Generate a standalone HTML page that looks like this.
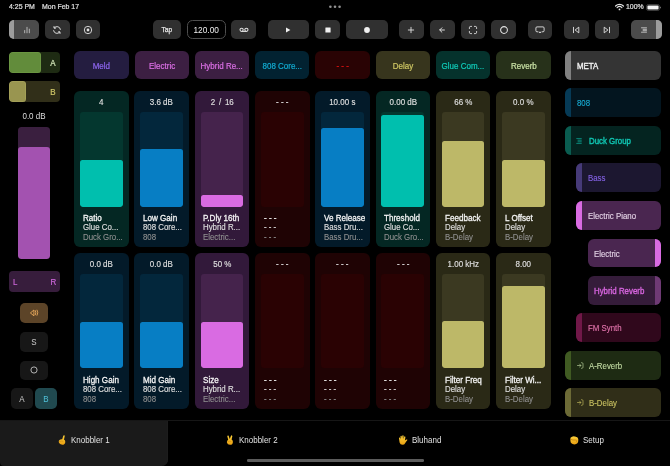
<!DOCTYPE html>
<html lang="en"><head><meta charset="utf-8"><title>Knobbler</title><style>
*{box-sizing:border-box;margin:0;padding:0}
html,body{width:670px;height:466px;background:#000;overflow:hidden}
body{font-family:"Liberation Sans",sans-serif;color:#ddd;font-size:8.6px;position:relative}
#app{position:absolute;left:0;top:0;width:670px;height:466px;overflow:hidden;transform:translateZ(0);will-change:transform}
.a{position:absolute}
.btn{position:absolute;top:20px;height:19.4px;border-radius:5px;background:#303030}
.btn svg{position:absolute;left:50%;top:50%;transform:translate(-50%,-50%);overflow:visible}
.t{position:absolute;white-space:nowrap;line-height:1}
.c{text-align:center}
.n{display:inline-block;transform:scaleX(.93);white-space:nowrap}
.nl{transform-origin:0 50%}
.nr{transform-origin:100% 50%}
.m{-webkit-text-stroke:0.3px}
.dev{position:absolute;top:51.3px;height:27.9px;border-radius:6px;width:54.3px;text-align:center;line-height:30.1px;font-size:8.6px;white-space:nowrap;overflow:hidden;-webkit-text-stroke:0.2px}
.cell{position:absolute;width:54.6px;height:155.8px;border-radius:6px}
.cell .v{position:absolute;left:-4px;right:-4px;top:5.5px;text-align:center;font-size:8.6px;line-height:10px;color:#e0e0e0;white-space:nowrap;transform:scaleX(.93);-webkit-text-stroke:0.12px}
.cell .tr{position:absolute;left:5.9px;width:42.7px;top:21.1px;height:94px;border-radius:3px;overflow:hidden}
.cell .f{position:absolute;left:0;right:0;bottom:0;border-radius:2.5px}
.cell .l{position:absolute;left:8.8px;width:60px;white-space:nowrap;font-size:8.6px;line-height:10px;transform:scaleX(.93);transform-origin:0 50%}
.cell .l1{top:121.5px;color:#f6f6f6;-webkit-text-stroke:0.28px #f6f6f6;transform:scaleX(.94)}
.cell .l2{top:131.3px;color:#dcdcdc;-webkit-text-stroke:0.18px #dcdcdc;transform:scaleX(.915)}
.cell .l3{top:141px;color:#909090;transform:scaleX(.915);-webkit-text-stroke:0.1px}
.trk{position:absolute;height:28.6px;border-radius:6px;overflow:hidden;font-size:8.6px;line-height:30.2px;white-space:nowrap}
.trk i{position:absolute;top:0;bottom:0;width:6px}
.trk span{position:absolute;top:0;transform:scaleX(.915);transform-origin:0 50%}
.trk svg{position:absolute}
.sb{position:absolute;left:20.1px;width:28.1px;height:19.8px;border-radius:5px;background:#171717;text-align:center;line-height:20.6px;font-size:8.6px;color:#cfcfcf}
.tab{position:absolute;top:420.4px;height:45px;width:167.5px;text-align:center;line-height:39.8px;font-size:8.6px;color:#e2e2e2;white-space:nowrap}
.tab svg{vertical-align:-1.6px;margin-right:5.5px}
.sr{position:absolute;width:1px;height:1px;overflow:hidden;opacity:0;font-size:1px}
</style></head><body><div id="app">
<div class="t" style="left:9px;top:3.1px;font-size:7.2px;-webkit-text-stroke:0.2px;color:#e0e0e0;transform:scaleX(.965);transform-origin:0 50%">4:25 PM</div>
<div class="t" style="left:41.8px;top:3.1px;font-size:7.2px;-webkit-text-stroke:0.2px;color:#e0e0e0;transform:scaleX(.965);transform-origin:0 50%">Mon Feb 17</div>
<svg class="a" style="left:326px;top:4px" width="18" height="6" viewBox="0 0 18 6"><circle cx="4.4" cy="2.8" r="1.3" fill="#929292"/><circle cx="9" cy="2.8" r="1.3" fill="#929292"/><circle cx="13.6" cy="2.8" r="1.3" fill="#929292"/></svg>
<svg class="a" style="left:614.5px;top:2.5px" width="9" height="8" viewBox="0 0 9 8"><path d="M0.6 3 A5.6 5.6 0 0 1 8.4 3" fill="none" stroke="#e6e6e6" stroke-width="1.2" stroke-linecap="round"/><path d="M2.1 4.6 A3.4 3.4 0 0 1 6.9 4.6" fill="none" stroke="#e6e6e6" stroke-width="1.2" stroke-linecap="round"/><circle cx="4.5" cy="6.4" r="0.9" fill="#e6e6e6"/></svg>
<div class="t" style="left:625.8px;top:3.4px;font-size:7.2px;-webkit-text-stroke:0.2px;color:#e0e0e0;transform:scaleX(.965);transform-origin:0 50%">100%</div>
<svg class="a" style="left:646.2px;top:3.6px" width="16" height="8" viewBox="0 0 16 8"><rect x="0.5" y="0.5" width="13" height="6" rx="1.8" fill="none" stroke="#777" stroke-width="0.5"/><rect x="1.4" y="1.4" width="11.2" height="4.2" rx="1" fill="#f4f4f4"/><rect x="14.1" y="2.5" width="0.8" height="2" rx="0.4" fill="#888"/></svg>
<div class="btn" style="left:8.5px;width:30.7px;background:#4b4b4b;overflow:hidden;"><i class="a" style="left:0;top:0;bottom:0;width:5.8px;background:#9c9c9c"></i><span class="a" style="left:6px;right:0;top:0;bottom:0"><svg width="6" height="7" viewBox="0 0 6 7" style="margin-left:-0.2px"><g stroke="#d0d0d0" stroke-width="0.8" stroke-linecap="round"><path d="M0.7 4V6.3M3 0.8V6.3M5.3 2.6V6.3"/></g></svg></span></div>
<div class="btn" style="left:45.1px;width:24.8px;background:#303030;"><svg width="9" height="8" viewBox="0 0 9 8"><g fill="none" stroke="#e2e2e2" stroke-width="0.95" stroke-linecap="round" stroke-linejoin="round"><path d="M7.9 3.4A3.4 3.2 0 0 0 1.8 1.9M1.1 4.6A3.4 3.2 0 0 0 7.2 6.1"/><path d="M1.5 0.5V2.1H3.1M7.5 7.5V5.9H5.9"/></g></svg></div>
<div class="btn" style="left:75.7px;width:24.7px;background:#303030;"><svg width="9" height="9" viewBox="0 0 9 9"><circle cx="4.5" cy="4.5" r="3.7" fill="none" stroke="#e2e2e2" stroke-width="0.9"/><circle cx="4.5" cy="4.5" r="1.4" fill="#e2e2e2"/></svg></div>
<div class="btn" style="left:153.2px;width:27.8px;background:#303030;"><div class="t c" style="left:0;right:0;top:6.1px;font-size:7px;color:#e6e6e6;-webkit-text-stroke:0.25px;transform:scaleX(.95)">Tap</div></div>
<div class="btn" style="left:186.8px;width:38.8px;background:#000;border:0.8px solid #4e4e4e;border-radius:5.5px;"><div class="t c" style="left:0;right:0;top:4.7px;font-size:8.3px;color:#f0f0f0">120.00</div></div>
<div class="btn" style="left:231.2px;width:24.8px;background:#303030;"><svg width="10" height="5" viewBox="0 0 10 5"><g fill="none" stroke="#e2e2e2" stroke-width="1.05"><circle cx="2.6" cy="2.3" r="1.6"/><circle cx="7.4" cy="2.3" r="1.6"/><path d="M2.6 3.9H7.4"/></g></svg></div>
<div class="btn" style="left:267.6px;width:41.8px;background:#303030;"><svg width="6" height="6" viewBox="0 0 6 6"><path d="M1 0.4L5.4 3L1 5.6Z" fill="#f0f0f0"/></svg></div>
<div class="btn" style="left:315.2px;width:24.8px;background:#303030;"><svg width="6" height="6" viewBox="0 0 6 6"><rect x="0.4" y="0.4" width="5.2" height="5.2" rx="0.4" fill="#f0f0f0"/></svg></div>
<div class="btn" style="left:345.8px;width:42.0px;background:#303030;"><svg width="6" height="6" viewBox="0 0 6 6"><circle cx="3" cy="3" r="2.9" fill="#f0f0f0"/></svg></div>
<div class="btn" style="left:399px;width:24.8px;background:#303030;"><svg width="7" height="7" viewBox="0 0 7 7"><path d="M3.5 0.8V6.2M0.8 3.5H6.2" stroke="#e0e0e0" stroke-width="0.9" stroke-linecap="round"/></svg></div>
<div class="btn" style="left:430px;width:24.8px;background:#303030;"><svg width="6" height="6" viewBox="0 0 6 6"><path d="M5.4 3H0.8M2.9 0.8L0.7 3L2.9 5.2" fill="none" stroke="#e2e2e2" stroke-width="0.95" stroke-linecap="round" stroke-linejoin="round"/></svg></div>
<div class="btn" style="left:460.6px;width:24.8px;background:#303030;"><svg width="9" height="9" viewBox="0 0 9 9"><path d="M0.9 3V2.2Q0.9 0.9 2.2 0.9H3M6 0.9H6.8Q8.1 0.9 8.1 2.2V3M8.1 6V6.8Q8.1 8.1 6.8 8.1H6M3 8.1H2.2Q0.9 8.1 0.9 6.8V6" fill="none" stroke="#e2e2e2" stroke-width="0.95" stroke-linecap="round"/></svg></div>
<div class="btn" style="left:491.2px;width:24.8px;background:#303030;"><svg width="9" height="9" viewBox="0 0 9 9"><circle cx="4.5" cy="4.5" r="3.4" fill="none" stroke="#e2e2e2" stroke-width="1.05"/></svg></div>
<div class="btn" style="left:527.6px;width:24.8px;background:#303030;"><svg width="10" height="8" viewBox="0 0 10 8"><path d="M3 5.8H2Q0.9 5.8 0.9 4.7V2Q0.9 0.9 2 0.9H8Q9.1 0.9 9.1 2V4.7Q9.1 5.8 8 5.8H7" fill="none" stroke="#e2e2e2" stroke-width="0.9" stroke-linecap="round"/><path d="M3.7 7L5 5.2L6.3 7Z" fill="#e2e2e2"/></svg></div>
<div class="btn" style="left:564px;width:24.8px;background:#303030;"><svg width="7" height="7" viewBox="0 0 7 7"><path d="M1 0.8V6.2M6 0.9L2.6 3.5L6 6.1Z" fill="none" stroke="#e2e2e2" stroke-width="0.9" stroke-linecap="round" stroke-linejoin="round"/></svg></div>
<div class="btn" style="left:594.6px;width:24.8px;background:#303030;"><svg width="7" height="7" viewBox="0 0 7 7"><path d="M6 0.8V6.2M1 0.9L4.4 3.5L1 6.1Z" fill="none" stroke="#e2e2e2" stroke-width="0.9" stroke-linecap="round" stroke-linejoin="round"/></svg></div>
<div class="btn" style="left:631px;width:30.6px;background:#4b4b4b;overflow:hidden;"><i class="a" style="right:0;top:0;bottom:0;width:5.6px;background:#9c9c9c"></i><span class="a" style="left:0;right:5.6px;top:0;bottom:0"><svg width="7" height="6" viewBox="0 0 7 6"><path d="M0.6 0.8H6.4M2.2 2.3H6.4M2.2 3.7H6.4M0.6 5.2H6.4" stroke="#d8d8d8" stroke-width="0.8"/></svg></span></div>
<div class="a" style="left:8.5px;top:52px;width:51.1px;height:21px;border-radius:4px;background:#1e2b13;overflow:hidden"><div class="a" style="left:0;top:0;bottom:0;width:32.5px;background:#628c3b;border-radius:3.5px;box-shadow:inset 0 0 0 0.6px rgba(160,210,110,.28)"></div><div class="t n" style="left:41.4px;top:6.5px;color:#d4e8ba;-webkit-text-stroke:0.2px">A</div></div>
<div class="a" style="left:8.5px;top:81.4px;width:51.1px;height:21px;border-radius:4px;background:#312f19;overflow:hidden"><div class="a" style="left:0;top:0;bottom:0;width:17.5px;background:#999550;border-radius:3.5px;box-shadow:inset 0 0 0 0.6px rgba(220,215,130,.28)"></div><div class="t n" style="left:41.4px;top:6.5px;color:#d0c768;-webkit-text-stroke:0.2px">B</div></div>
<div class="t c" style="left:4px;width:60px;top:112px;color:#dedede;transform:scaleX(.93)">0.0 dB</div>
<div class="a" style="left:17.8px;top:127px;width:32.6px;height:132px;border-radius:3.5px;background:#3a1f3f;overflow:hidden"><div class="a" style="left:0;right:0;bottom:0;top:20px;background:#a352b0;border-radius:3px"></div></div>
<div class="a" style="left:8.6px;top:271.4px;width:51px;height:20.8px;border-radius:4px;background:#371d3c"><div class="t n nl" style="left:4.2px;top:6.3px;color:#cf68dc;-webkit-text-stroke:0.15px">L</div><div class="t n nr" style="right:3.8px;top:6.3px;color:#cf68dc;-webkit-text-stroke:0.15px">R</div></div>
<div class="sb" style="top:303.3px;background:#5c4428"><svg class="a" style="left:10.2px;top:6.1px" width="9" height="8" viewBox="0 0 9 8"><g fill="none" stroke="#f2b060" stroke-width="0.85" stroke-linecap="round" stroke-linejoin="round"><path d="M0.7 3.7L3.9 1V6.4Z"/><path d="M5.4 1.6Q6.5 3.7 5.4 5.8M7.1 1.1Q8.6 3.7 7.1 6.3"/></g></svg></div>
<div class="sb" style="top:331.9px;height:20.6px;line-height:21.6px"><span class="n">S</span></div>
<div class="sb" style="top:361.2px;height:18.4px"><svg class="a" style="left:10.05px;top:4.7px" width="8" height="8" viewBox="0 0 8 8"><circle cx="4" cy="4" r="3.1" fill="none" stroke="#cfcfcf" stroke-width="0.85"/></svg><span class="sr">O</span></div>
<div class="sb" style="left:11.2px;width:21.8px;top:388.3px;height:20.6px;line-height:23.2px"><span class="n">A</span></div>
<div class="sb" style="left:35.3px;width:21.9px;top:388.3px;height:20.6px;line-height:23.2px;background:#20494f;color:#4fc0d8"><span class="n">B</span></div>
<div class="dev" style="left:74.25px;background:#241d40;color:#8d66ee"><span class="n">Meld</span></div>
<div class="dev" style="left:134.55px;background:#3c1f42;color:#dc70e6"><span class="n">Electric</span></div>
<div class="dev" style="left:194.85px;background:#3c1f42;color:#dc70e6"><span class="n">Hybrid Re...</span></div>
<div class="dev" style="left:255.15px;background:#022231;color:#13acd2"><span class="n">808 Core...</span></div>
<div class="dev" style="left:315.45px;background:#290304;color:#e01212"><span class="n">- - -</span></div>
<div class="dev" style="left:375.75px;background:#37351d;color:#d0c864"><span class="n">Delay</span></div>
<div class="dev" style="left:436.05px;background:#05322c;color:#10ccba"><span class="n">Glue Com...</span></div>
<div class="dev" style="left:496.35px;background:#27311a;color:#cae2a6"><span class="n">Reverb</span></div>
<div class="cell" style="left:74.1px;top:91.2px;height:156.2px;background:#042723"><div class="v">4</div><div class="tr" style="top:21.1px;height:94.6px;background:#04372f"><div class="f" style="height:46.9px;background:#00bfae"></div></div><div class="l l1">Ratio</div><div class="l l2">Glue Co...</div><div class="l l3">Duck Gro...</div></div>
<div class="cell" style="left:134.4px;top:91.2px;height:156.2px;background:#031a29"><div class="v">3.6 dB</div><div class="tr" style="top:21.1px;height:94.6px;background:#03273c"><div class="f" style="height:58.3px;background:#077ec4"></div></div><div class="l l1">Low Gain</div><div class="l l2">808 Core...</div><div class="l l3">808</div></div>
<div class="cell" style="left:194.7px;top:91.2px;height:156.2px;background:#32193a"><div class="v" style="word-spacing:1.6px">2 / 16</div><div class="tr" style="top:21.1px;height:94.6px;background:#45234c"><div class="f" style="height:12.3px;background:#d96be2"></div></div><div class="l l1">P.Dly 16th</div><div class="l l2">Hybrid R...</div><div class="l l3">Electric...</div></div>
<div class="cell" style="left:255.0px;top:91.2px;height:156.2px;background:#1f0304"><div class="v">- - -</div><div class="tr" style="top:21.1px;height:94.6px;background:#2a0203"></div><div class="l l1">- - -</div><div class="l l2">- - -</div><div class="l l3">- - -</div></div>
<div class="cell" style="left:315.3px;top:91.2px;height:156.2px;background:#031a29"><div class="v">10.00 s</div><div class="tr" style="top:21.1px;height:94.6px;background:#03273c"><div class="f" style="height:78.9px;background:#077ec4"></div></div><div class="l l1">Ve Release</div><div class="l l2">Bass Dru...</div><div class="l l3">Bass Dru...</div></div>
<div class="cell" style="left:375.6px;top:91.2px;height:156.2px;background:#042723"><div class="v">0.00 dB</div><div class="tr" style="top:21.1px;height:94.6px;background:#04372f"><div class="f" style="height:91.9px;background:#00bfae"></div></div><div class="l l1">Threshold</div><div class="l l2">Glue Co...</div><div class="l l3">Duck Gro...</div></div>
<div class="cell" style="left:435.9px;top:91.2px;height:156.2px;background:#2a2916"><div class="v">66 %</div><div class="tr" style="top:21.1px;height:94.6px;background:#3b3921"><div class="f" style="height:65.7px;background:#bdb868"></div></div><div class="l l1">Feedback</div><div class="l l2">Delay</div><div class="l l3">B-Delay</div></div>
<div class="cell" style="left:496.2px;top:91.2px;height:156.2px;background:#2a2916"><div class="v">0.0 %</div><div class="tr" style="top:21.1px;height:94.6px;background:#3b3921"><div class="f" style="height:46.9px;background:#bdb868"></div></div><div class="l l1">L Offset</div><div class="l l2">Delay</div><div class="l l3">B-Delay</div></div>
<div class="cell" style="left:74.1px;top:253.2px;height:155.8px;background:#031a29"><div class="v">0.0 dB</div><div class="tr" style="top:21.3px;height:93.9px;background:#03273c"><div class="f" style="height:46.8px;background:#077ec4"></div></div><div class="l l1">High Gain</div><div class="l l2">808 Core...</div><div class="l l3">808</div></div>
<div class="cell" style="left:134.4px;top:253.2px;height:155.8px;background:#031a29"><div class="v">0.0 dB</div><div class="tr" style="top:21.3px;height:93.9px;background:#03273c"><div class="f" style="height:46.8px;background:#077ec4"></div></div><div class="l l1">Mid Gain</div><div class="l l2">808 Core...</div><div class="l l3">808</div></div>
<div class="cell" style="left:194.7px;top:253.2px;height:155.8px;background:#32193a"><div class="v">50 %</div><div class="tr" style="top:21.3px;height:93.9px;background:#45234c"><div class="f" style="height:46.8px;background:#d96be2"></div></div><div class="l l1">Size</div><div class="l l2">Hybrid R...</div><div class="l l3">Electric...</div></div>
<div class="cell" style="left:255.0px;top:253.2px;height:155.8px;background:#1f0304"><div class="v">- - -</div><div class="tr" style="top:21.3px;height:93.9px;background:#2a0203"></div><div class="l l1">- - -</div><div class="l l2">- - -</div><div class="l l3">- - -</div></div>
<div class="cell" style="left:315.3px;top:253.2px;height:155.8px;background:#1f0304"><div class="v">- - -</div><div class="tr" style="top:21.3px;height:93.9px;background:#2a0203"></div><div class="l l1">- - -</div><div class="l l2">- - -</div><div class="l l3">- - -</div></div>
<div class="cell" style="left:375.6px;top:253.2px;height:155.8px;background:#1f0304"><div class="v">- - -</div><div class="tr" style="top:21.3px;height:93.9px;background:#2a0203"></div><div class="l l1">- - -</div><div class="l l2">- - -</div><div class="l l3">- - -</div></div>
<div class="cell" style="left:435.9px;top:253.2px;height:155.8px;background:#2a2916"><div class="v">1.00 kHz</div><div class="tr" style="top:21.3px;height:93.9px;background:#3b3921"><div class="f" style="height:47.6px;background:#bdb868"></div></div><div class="l l1">Filter Freq</div><div class="l l2">Delay</div><div class="l l3">B-Delay</div></div>
<div class="cell" style="left:496.2px;top:253.2px;height:155.8px;background:#2a2916"><div class="v">8.00</div><div class="tr" style="top:21.3px;height:93.9px;background:#3b3921"><div class="f" style="height:82.5px;background:#bdb868"></div></div><div class="l l1">Filter Wi...</div><div class="l l2">Delay</div><div class="l l3">B-Delay</div></div>
<div class="trk" style="left:565.2px;top:51px;width:96.1px;background:#343434;color:#f0f0f0"><i style="left:0;background:#808080"></i><span style="left:11.6px;-webkit-text-stroke:0.38px;transform:scaleX(.915);">META</span></div>
<div class="trk" style="left:565.2px;top:88.4px;width:96.1px;background:#03151f;color:#18aed6"><i style="left:0;background:#063a56"></i><span style="left:11.6px;-webkit-text-stroke:0.12px;">808</span></div>
<div class="trk" style="left:565.2px;top:126px;width:96.1px;background:#042420;color:#10c6b2"><i style="left:0;background:#0a5c50"></i><svg style="left:11.1px;top:11.5px" width="6" height="6" viewBox="0 0 6 6"><path d="M0.3 0.6H5.7M1.6 2.2H5.7M1.6 3.8H5.7M0.3 5.4H5.7" stroke="#10c6b2" stroke-width="0.7" opacity="0.85"/></svg><span style="left:23.8px;-webkit-text-stroke:0.38px;transform:scaleX(.915);">Duck Group</span></div>
<div class="trk" style="left:576.2px;top:163.4px;width:85.1px;background:#1c1730;color:#8462e4"><i style="left:0;background:#463a78"></i><span style="left:11.6px;-webkit-text-stroke:0.12px;">Bass</span></div>
<div class="trk" style="left:576.2px;top:201px;width:85.1px;background:#4a2650;color:#e4d4e6"><i style="left:0;background:#d96be2"></i><span style="left:11.6px;-webkit-text-stroke:0.12px;">Electric Piano</span></div>
<div class="trk" style="left:587.8px;top:238.5px;width:73.5px;background:#4a2650;color:#e4d4e6"><i style="right:0;background:#d96be2"></i><span style="left:6.2px;-webkit-text-stroke:0.12px;">Electric</span></div>
<div class="trk" style="left:587.8px;top:276px;width:73.5px;background:#351c3a;color:#d464dc"><i style="right:0;background:#6e3a74"></i><span style="left:6.2px;-webkit-text-stroke:0.38px;transform:scaleX(.915);">Hybrid Reverb</span></div>
<div class="trk" style="left:576.2px;top:313.4px;width:85.1px;background:#30081c;color:#e274ac"><i style="left:0;background:#701848"></i><span style="left:11.6px;-webkit-text-stroke:0.12px;">FM Synth</span></div>
<div class="trk" style="left:565.2px;top:351px;width:96.1px;background:#1e2b13;color:#c4dca4"><i style="left:0;background:#405a22"></i><svg style="left:11.6px;top:11.1px" width="7" height="7" viewBox="0 0 7 7"><path d="M0.5 3.5H3.8M2.6 2.1L4 3.5L2.6 4.9M4.4 0.7H4.9Q6 0.7 6 1.8V5.2Q6 6.3 4.9 6.3H4.4" fill="none" stroke="#c4dca4" stroke-width="0.7" stroke-linecap="round" stroke-linejoin="round" opacity="0.9"/></svg><span style="left:23.8px;-webkit-text-stroke:0.12px;">A-Reverb</span></div>
<div class="trk" style="left:565.2px;top:388.4px;width:96.1px;background:#302e18;color:#c8c060"><i style="left:0;background:#6c6a36"></i><svg style="left:11.6px;top:11.1px" width="7" height="7" viewBox="0 0 7 7"><path d="M0.5 3.5H3.8M2.6 2.1L4 3.5L2.6 4.9M4.4 0.7H4.9Q6 0.7 6 1.8V5.2Q6 6.3 4.9 6.3H4.4" fill="none" stroke="#c8c060" stroke-width="0.7" stroke-linecap="round" stroke-linejoin="round" opacity="0.9"/></svg><span style="left:23.8px;-webkit-text-stroke:0.12px;">B-Delay</span></div>
<div class="a" style="left:0;top:420.2px;width:670px;height:1.1px;background:#161616"></div>
<div class="a" style="left:0;top:420.9px;width:167.6px;height:45.1px;background:#1a1a1a;border-radius:0 0 6.5px 4px;box-shadow:inset -0.6px 0 0 #202020"></div>
<svg class="a" width="0" height="0" style="left:0;top:0"><defs><linearGradient id="hg" x1="0" y1="0" x2="0" y2="1"><stop offset="0" stop-color="#fbd03a"/><stop offset="1" stop-color="#eaa012"/></linearGradient></defs></svg>
<svg class="a" style="left:58.2px;top:435.0px" width="8" height="10" viewBox="0 0 8 10"><path d="M4.2 4.3L5.3 0.8Q5.6 0.1 6.3 0.3Q6.9 0.6 6.7 1.3L6 4.6Q7.4 5.2 7.3 6.9Q7.1 9.7 4.2 9.7Q1.5 9.7 0.9 7.6Q0.3 5.6 1.5 4.9Q2.6 4.1 4.2 4.3Z" fill="url(#hg)"/><path d="M1.6 6.4Q3.2 5.6 5 6.2" stroke="#c98410" stroke-width="0.6" fill="none" stroke-linecap="round"/></svg>
<div class="t n nl" style="left:71.3px;top:435.9px;color:#e2e2e2"><span class="sr">☝ </span>Knobbler 1</div>
<svg class="a" style="left:225.9px;top:435.2px" width="8" height="10" viewBox="0 0 8 10"><path d="M1.3 1.2Q1.5 0.4 2.2 0.6Q2.7 0.8 2.9 1.4L3.7 4.1L4.9 0.9Q5.2 0.2 5.9 0.4Q6.5 0.7 6.3 1.5L5.6 4.6Q7 5.2 6.9 6.9Q6.8 9.8 4 9.8Q1.4 9.8 0.9 7.5Q0.5 5.6 2.2 4.7Z" fill="url(#hg)"/><path d="M1.6 6.6Q3.2 5.7 4.9 6.3" stroke="#c98410" stroke-width="0.6" fill="none" stroke-linecap="round"/></svg>
<div class="t n nl" style="left:238.9px;top:435.9px;color:#e2e2e2"><span class="sr">✌ </span>Knobbler 2</div>
<svg class="a" style="left:397.6px;top:434.9px" width="10" height="10" viewBox="0 0 10 10"><path d="M1 3.4Q0.9 2.7 1.5 2.6Q2 2.5 2.2 3.1L2.6 4.4L2.5 1.4Q2.5 0.7 3.1 0.7Q3.7 0.7 3.8 1.4L4 3.8L4.3 0.9Q4.4 0.2 5 0.3Q5.6 0.3 5.6 1L5.5 4L6.2 1.8Q6.4 1.2 7 1.4Q7.5 1.6 7.4 2.2L6.9 5.6L8.2 4.6Q8.8 4.2 9.2 4.6Q9.5 5 9.1 5.5Q7.9 6.7 7.3 7.9Q6.4 9.8 4.4 9.8Q2.2 9.8 1.6 7.6Z" fill="url(#hg)"/></svg>
<div class="t n nl" style="left:411.6px;top:435.9px;color:#e2e2e2"><span class="sr">🖐 </span>Bluhand</div>
<svg class="a" style="left:569.6px;top:435.9px" width="9" height="9" viewBox="0 0 9 9"><path d="M0.4 2.6Q0.4 1.2 1.6 1.1Q2 0.4 3 0.5Q3.8 0 4.6 0.5Q5.6 0.2 6.2 0.9Q7.4 0.8 7.8 1.9Q8.4 2.6 8.3 4Q8.4 8.4 4.4 8.4Q0.4 8.4 0.4 4.6Z" fill="url(#hg)"/><path d="M0.9 3.4Q2.6 4.4 5.4 4Q6.6 3.9 6.9 4.8Q7 5.6 6.2 6" stroke="#c07a0c" stroke-width="0.7" fill="none" stroke-linecap="round"/></svg>
<div class="t n nl" style="left:582.9px;top:435.9px;color:#e2e2e2"><span class="sr">✊ </span>Setup</div>
<div class="a" style="left:246.6px;top:459.2px;width:177.4px;height:2.6px;border-radius:1.3px;background:#5c5c5c"></div>
</div></body></html>
